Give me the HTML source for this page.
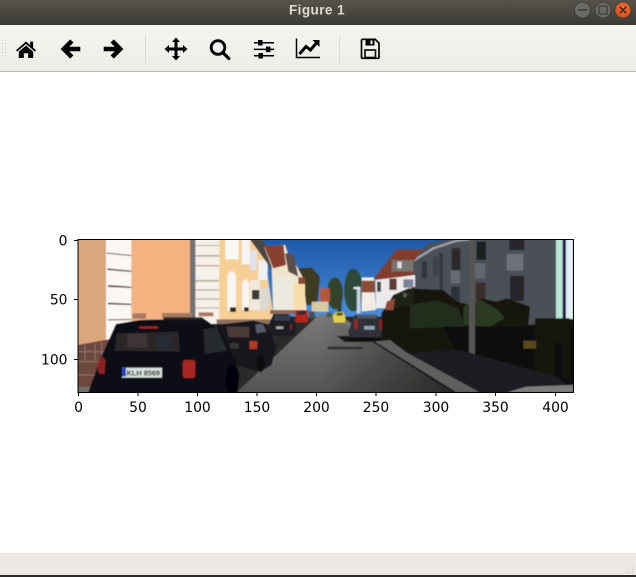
<!DOCTYPE html>
<html><head><meta charset="utf-8"><style>
html,body{margin:0;padding:0;background:#fff}
body{width:636px;height:577px;overflow:hidden;position:relative}
svg{position:absolute;left:0;top:0}
</style></head><body>
<svg width="636" height="577" viewBox="0 0 636 577" xmlns="http://www.w3.org/2000/svg">
<defs>
<linearGradient id="tb" x1="0" y1="0" x2="0" y2="1"><stop offset="0" stop-color="#575349"/><stop offset="1" stop-color="#3c3b37"/></linearGradient>
<linearGradient id="tl" x1="0" y1="0" x2="0" y2="1"><stop offset="0" stop-color="#f6f4f0"/><stop offset="1" stop-color="#eeece7"/></linearGradient>
<linearGradient id="sky" x1="0" y1="0" x2="0" y2="1"><stop offset="0" stop-color="#1c57a8"/><stop offset="1" stop-color="#4a8dd8"/></linearGradient>
<linearGradient id="road" gradientUnits="userSpaceOnUse" x1="0" y1="255" x2="0" y2="487"><stop offset="0" stop-color="#7a7977"/><stop offset="1" stop-color="#555452"/></linearGradient>
<linearGradient id="shade" gradientUnits="userSpaceOnUse" x1="30" y1="0" x2="410" y2="0"><stop offset="0" stop-color="#000" stop-opacity="0"/><stop offset="1" stop-color="#000" stop-opacity=".5"/></linearGradient>
<filter id="b" x="-5%" y="-5%" width="110%" height="110%"><feGaussianBlur stdDeviation="1.5"/></filter>
<clipPath id="im"><rect x="78" y="239" width="495.500" height="153"/></clipPath>
<radialGradient id="cl" cx=".5" cy=".4" r=".6"><stop offset="0" stop-color="#f0703c"/><stop offset="1" stop-color="#d9501f"/></radialGradient>
</defs>
<rect width="636" height="577" fill="#fff"/>
<rect width="636" height="25" fill="url(#tb)"/>
<text x="317" y="14.500" text-anchor="middle" font-family="'Liberation Sans',sans-serif" font-size="13.500" font-weight="700" fill="#dfdbd2" letter-spacing=".45">Figure 1</text>
<circle cx="582.500" cy="10" r="8" fill="#6a6a64" stroke="#38362f" stroke-width=".7"/>
<rect x="578" y="9.300" width="9" height="1.400" fill="#3c3b37"/>
<circle cx="603" cy="10" r="8" fill="#6a6a64" stroke="#38362f" stroke-width=".7"/>
<rect x="599" y="6" width="8" height="8" fill="none" stroke="#3c3b37" stroke-width="1.200"/>
<circle cx="623" cy="10" r="8" fill="url(#cl)" stroke="#3f3a30" stroke-width=".7"/>
<path d="M619.800 6.800l6.400 6.400M626.200 6.800l-6.400 6.400" stroke="#4a2412" stroke-width="1.500"/>

<rect y="25" width="636" height="46" fill="url(#tl)"/>
<rect y="71" width="636" height="1" fill="#bdb8af"/>
<g fill="#c9c6bf"><rect x="2" y="40" width="1" height="1"/><rect x="5" y="40" width="1" height="1"/><rect x="2" y="43" width="1" height="1"/><rect x="5" y="43" width="1" height="1"/><rect x="2" y="46" width="1" height="1"/><rect x="5" y="46" width="1" height="1"/><rect x="2" y="49" width="1" height="1"/><rect x="5" y="49" width="1" height="1"/><rect x="2" y="52" width="1" height="1"/><rect x="5" y="52" width="1" height="1"/><rect x="2" y="55" width="1" height="1"/><rect x="5" y="55" width="1" height="1"/></g>
<rect x="145" y="35" width="1" height="28" fill="#dedbd4"/>
<rect x="339" y="35" width="1" height="28" fill="#dedbd4"/>

<!-- home -->
<path d="M16 50.200 26 41.500l4.200 3.600V41.600h2.900v6L36 50.200l-1.200 1.300L26 44 17.200 51.500Z" fill="#000"/>
<path d="M18.800 51.600 26 45.600l7.200 6V58h-5v-4.800h-4.400V58h-5Z" fill="#000"/>
<!-- back -->
<path d="M61 49 70.200 39.800 73 42.600 68.600 47H80v4H68.600L73 55.400 70.200 58.200Z" fill="#000" stroke="#000" stroke-width=".6" stroke-linejoin="round"/>
<!-- forward -->
<path d="M123 49 113.800 39.800 111 42.600 115.400 47H104v4h11.400L111 55.400 113.800 58.200Z" fill="#000" stroke="#000" stroke-width=".6" stroke-linejoin="round"/>
<!-- move -->
<path d="M176 37.500l4 4.500h-2.500v5.500H183V45l4.500 4-4.500 4v-2.500h-5.500V56h2.500l-4 4.500-4-4.500h2.500v-5.500H169V53l-4.500-4 4.500-4v2.500h5.500V42H172Z" fill="#000"/>
<!-- zoom -->
<circle cx="218" cy="47.500" r="6.800" fill="none" stroke="#000" stroke-width="2.900"/>
<path d="M222.800 52.500l6 6" stroke="#000" stroke-width="3.200" stroke-linecap="round"/>
<!-- sliders -->
<g fill="#000"><rect x="254" y="42" width="20" height="1.500"/><rect x="254" y="48.600" width="20" height="1.500"/><rect x="254" y="55" width="20" height="1.500"/><rect x="258" y="40" width="4.500" height="5.500"/><rect x="266" y="46.600" width="4.500" height="5.500"/><rect x="258.500" y="53" width="4.500" height="5.500"/></g>
<!-- chart -->
<path d="M296.500 38.500V57.500H320" fill="none" stroke="#000" stroke-width="1.500"/>
<path d="M299.500 54 306 46.500 310.500 50 316 43.500" fill="none" stroke="#000" stroke-width="3"/>
<path d="M312.500 40h7v7Z" fill="#000"/>
<!-- save -->
<path d="M361.500 40.500a1.200 1.200 0 0 1 1.200-1.200h12.500l3.800 3.800v14a1.200 1.200 0 0 1-1.200 1.200h-15.100a1.200 1.200 0 0 1-1.200-1.200Z" fill="none" stroke="#000" stroke-width="1.700"/>
<path d="M365.500 39.500h9v6h-9Z" fill="#000"/><rect x="370.500" y="40.500" width="2" height="3.600" fill="#f2f0ec"/>
<rect x="365" y="50" width="10.500" height="7.500" fill="none" stroke="#000" stroke-width="1.600"/>

<!-- image -->
<g clip-path="url(#im)"><rect x="78" y="239" width="496" height="153" fill="#2b2a28"/>
<g filter="url(#b)" transform="translate(40 230) scale(.33333)">
<!-- sky -->
<rect x="640" y="20" width="1180" height="240" fill="url(#sky)"/>
<!-- far trees -->
<path d="M775 115 815 112 840 140 832 225 790 225Z" fill="#3d3a24"/>
<ellipse cx="885" cy="190" rx="24" ry="48" fill="#33452c"/><ellipse cx="940" cy="180" rx="28" ry="64" fill="#2e4a38"/>
<rect x="840" y="175" width="30" height="40" fill="#b5573a"/><rect x="815" y="215" width="50" height="30" fill="#d9c9a0"/>
<!-- left walls -->
<rect x="100" y="20" width="100" height="340" fill="#dca67d"/>
<rect x="198" y="20" width="78" height="310" fill="#fbf7f4"/>
<path d="M200 68l74 7v3l-74-7ZM202 115l72 7v4l-72-6ZM204 165l70 5v4l-70-3ZM204 218l70 3v4l-70-2ZM204 268l70-1v3l-70 1Z" fill="#5d4a45"/>
<rect x="274" y="20" width="178" height="262" fill="#f3b27f"/>
<rect x="450" y="20" width="16" height="250" fill="#6f7278"/>
<rect x="466" y="20" width="74" height="262" fill="#f6f0ea"/>
<path d="M466 45h72v3h-72ZM466 75h72v5h-72ZM466 105h72v4h-72ZM466 150h72v5h-72ZM466 178h72v4h-72ZM466 205h72v4h-72ZM466 232h72v3h-72Z" fill="#b8a79a"/>
<path d="M538 20H665L700 255 700 282H538Z" fill="#f5cf93"/>
<rect x="556" y="28" width="40" height="60" fill="#fbf8f5"/><rect x="605" y="28" width="25" height="75" fill="#f6f3f2"/><rect x="630" y="60" width="20" height="60" fill="#e3e2e8"/><rect x="655" y="90" width="28" height="60" fill="#eef0f2"/>
<path d="M562 135q13-25 26 0v108h-26ZM606 160q10-25 22 0v82h-22Z" fill="#faf5f0"/>
<rect x="570" y="232" width="18" height="14" fill="#2e2c2a"/><rect x="612" y="232" width="14" height="12" fill="#2e2c2a"/>
<rect x="630" y="150" width="30" height="90" fill="#f0e9de"/><rect x="660" y="175" width="28" height="65" fill="#dcd9d2"/>
<rect x="636" y="180" width="22" height="28" fill="#3b3936"/>
<path d="M630 28 665 28 740 120 700 125Z" fill="#4a4540"/>
<!-- right part of left houses -->
<path d="M672 50 735 45 745 75 760 90 790 145 800 240 700 248 695 110Z" fill="#f1e5cc"/>
<path d="M672 48 730 45 738 105 700 115Z" fill="#8a3f2f"/>
<path d="M735 70 760 70 775 140 745 125Z" fill="#5a5049"/>
<path d="M700 140h60v105h-60Z" fill="#ece9df"/><path d="M760 160h35v75h-35Z" fill="#f8dfaa"/>
<rect x="775" y="142" width="20" height="20" fill="#8a4a35"/>
<!-- wall base patches -->
<rect x="278" y="250" width="40" height="16" fill="#a57a62"/><rect x="366" y="249" width="90" height="14" fill="#a57a62"/><rect x="476" y="247" width="44" height="12" fill="#a57a62"/>
<rect x="530" y="268" width="170" height="14" fill="#8e7060"/><rect x="690" y="240" width="90" height="12" fill="#8a6a5a"/>
<!-- brick base -->
<path d="M113 345 222 325 150 470 113 470Z" fill="#6e473e"/>
<path d="M113 395h80M113 435h60M113 365h90M135 345v50M165 340v50M185 335v40" stroke="#92736a" stroke-width="3"/>
<path d="M113 470h60l-30 20h-30Z" fill="#716f68"/>
<!-- road -->
<path d="M590 487 835 255 900 255 1220 487Z" fill="url(#road)"/>
<!-- far car red -->
<rect x="766" y="240" width="38" height="38" rx="5" fill="#b4281f"/><rect x="772" y="243" width="25" height="11" fill="#3a2a2a"/>
<rect x="806" y="244" width="18" height="22" fill="#48505a"/>
<!-- car 3 -->
<path d="M688 280 700 252H745L768 285 765 318H690Z" fill="#1a1c22"/><rect x="703" y="255" width="48" height="17" fill="#363b4d"/><rect x="708" y="289" width="22" height="8" fill="#a8a6a0"/><rect x="750" y="282" width="6" height="16" fill="#7e2220"/>
<!-- car 2 -->
<path d="M530 285 640 272 680 282 708 350 695 405 660 425 590 405Z" fill="#12131a"/>
<path d="M560 290H628V322H565Z" fill="#4a3a38"/><path d="M645 283 668 282 680 305 650 310Z" fill="#565a66"/><rect x="628" y="333" width="24" height="24" fill="#b03a20"/><ellipse cx="662" cy="400" rx="12" ry="26" fill="#080808"/><rect x="570" y="338" width="26" height="18" fill="#343434"/>
<!-- main car -->
<path d="M145 487 180 390 228 282 300 270 490 265 540 300 585 395 598 430 592 487Z" fill="#0e0f14"/>
<path d="M230 310 415 305 420 365 224 362Z" fill="#2b2526"/>
<path d="M262 312h60v40h-60Z" fill="#3d3534"/><path d="M350 315h50v45h-50Z" fill="#282c34"/>
<path d="M490 298 530 292 562 362 495 372Z" fill="#262a2e"/>
<rect x="370" y="262" width="118" height="8" fill="#242424"/>
<rect x="298" y="289" width="56" height="7" fill="#a72024"/>
<rect x="428" y="390" width="38" height="54" rx="8" fill="#a82622"/>
<path d="M172 398 188 380 197 390 194 432 175 430Z" fill="#8b2320"/>
<rect x="246" y="413" width="120" height="30" fill="#d7e0dc"/><rect x="246" y="413" width="12" height="26" fill="#2244bb"/>
<text x="260" y="436" font-family="'Liberation Sans',sans-serif" font-size="23" font-weight="700" fill="#202028" textLength="100" lengthAdjust="spacingAndGlyphs">KLH 8569</text>
<ellipse cx="576" cy="450" rx="20" ry="46" fill="#050507"/>
</g>
<g filter="url(#b)" transform="translate(310 230) scale(.33333)">
<!-- right houses -->
<path d="M305 90 355 40 470 20H830V300H305Z" fill="#4c5059"/>
<path d="M305 95 370 55 440 32 480 28" fill="none" stroke="#9a9fa6" stroke-width="7"/>
<path d="M190 148 260 58H340L310 95 310 145Z" fill="#823c2f"/>
<path d="M245 90h65v35h-65Z" fill="#77736d"/><rect x="262" y="95" width="13" height="20" fill="#dcdde4"/>
<path d="M196 150 315 135V235H198Z" fill="#ecebea"/>
<rect x="238" y="146" width="22" height="34" fill="#5c3d35"/><rect x="280" y="148" width="30" height="25" fill="#7a8298"/>
<rect x="201" y="155" width="12" height="30" fill="#4a4a46"/>
<path d="M155 142 192 142 198 240 155 245Z" fill="#f2ece4"/><rect x="155" y="152" width="40" height="35" fill="#8a4e3a"/>
<rect x="140" y="170" width="12" height="80" fill="#c4d2e2"/><path d="M130 170h20v8h-20Z" fill="#e2e0dc"/>
<rect x="425" y="55" width="26" height="65" fill="#2a2b2f"/><rect x="335" y="95" width="16" height="50" fill="#33363d"/><rect x="368" y="80" width="17" height="55" fill="#3f424a"/>
<rect x="500" y="35" width="28" height="55" fill="#1f2024"/><rect x="598" y="28" width="45" height="32" fill="#25272c"/>
<rect x="590" y="72" width="50" height="50" fill="#6e7278"/><rect x="422" y="122" width="28" height="38" fill="#686c72"/><rect x="495" y="100" width="30" height="45" fill="#646870"/>
<rect x="600" y="138" width="42" height="75" fill="#26262a"/><rect x="497" y="158" width="30" height="50" fill="#3a2d2a"/><rect x="423" y="170" width="26" height="52" fill="#2b303b"/>
<rect x="388" y="70" width="10" height="120" fill="#35383e"/>
<!-- window right -->
<rect x="738" y="20" width="20" height="250" fill="#b6e7d4"/><rect x="758" y="20" width="10" height="250" fill="#2c1a4e"/><rect x="768" y="20" width="22" height="250" fill="#e0efef"/>
<!-- bushes -->
<path d="M215 250 250 195 295 175 400 180 440 215 480 225 510 205 560 215 590 205 660 230 655 285 800 265 800 487H430L190 335 215 320Z" fill="#12160f"/>
<path d="M300 225 380 210 445 235 465 290 300 295Z" fill="#222d1c"/>
<path d="M460 230 510 208 565 240 585 265 540 290 460 285Z" fill="#2a3a24"/>
<path d="M250 195 315 170 310 225 245 235Z" fill="#1a2019"/><circle cx="285" cy="195" r="7" fill="#56564c"/>
<path d="M230 215 255 205 250 240 225 240Z" fill="#8f4a38"/>
<path d="M400 290h400V487H500Z" fill="#0b0b0c"/>
<rect x="675" y="265" width="105" height="180" fill="#161211"/>
<rect x="640" y="332" width="38" height="24" fill="#58491f"/>
<rect x="477" y="30" width="18" height="365" fill="#555553"/>
<rect x="736" y="340" width="20" height="100" fill="#0a0908"/>
<!-- road right -->
<path d="M30 255 40 255 75 265 130 300 200 340 420 487H30Z" fill="url(#road)"/>
<path d="M30 255 40 255 75 265 130 300 200 340 420 487H30Z" fill="url(#shade)"/>
<path d="M50 350h110l-5 8H55Z" fill="#333"/>
<path d="M80 318 215 320 190 336H105Z" fill="#141415"/>
<!-- sidewalk -->
<path d="M190 335 240 330 290 368 520 487H430Z" fill="#5f5f5f"/>
<path d="M290 368 450 360 740 440 800 487H510Z" fill="#1c1b20"/>
<path d="M190 335 435 487" stroke="#161616" stroke-width="5"/>
<path d="M590 487 650 470 790 465 790 487Z" fill="#7b7e7b"/>
<!-- yellow car -->
<path d="M68 258 78 246H100L107 262 105 278H72Z" fill="#e3cf4a"/><rect x="80" y="248" width="18" height="9" fill="#51503a"/>
<rect x="50" y="248" width="16" height="14" fill="#505a5a"/>
<rect x="82" y="195" width="12" height="50" fill="#3c3c2c"/>
<!-- car right -->
<path d="M115 305 135 255H200L216 300 213 328 150 332 118 326Z" fill="#2e3339"/>
<rect x="142" y="254" width="58" height="11" fill="#505768"/><rect x="162" y="288" width="32" height="11" fill="#8fa3b0"/><rect x="133" y="268" width="10" height="30" fill="#982620"/><rect x="208" y="268" width="8" height="30" fill="#8e2420"/>
<path d="M118 322h95v10h-95Z" fill="#0c0c10"/>
</g></g>

<!-- axes frame -->
<rect x="78" y="239.500" width="495.500" height="153" fill="none" stroke="#000" stroke-width="1"/>
<g stroke="#000" stroke-width="1">
<path d="M78.500 392v4M138 392v4M197.500 392v4M257 392v4M316.500 392v4M376 392v4M436 392v4M495.500 392v4M555.500 392v4"/>
<path d="M74 240.500h4M74 299.500h4M74 359.500h4"/>
</g>
<g font-family="'DejaVu Sans',sans-serif" font-size="13.9" fill="#000" text-anchor="middle">
<text x="78.500" y="412">0</text><text x="138" y="412">50</text><text x="197.500" y="412">100</text><text x="257" y="412">150</text><text x="316.500" y="412">200</text><text x="376" y="412">250</text><text x="436" y="412">300</text><text x="495.500" y="412">350</text><text x="555.500" y="412">400</text>
</g>
<g font-family="'DejaVu Sans',sans-serif" font-size="13.9" fill="#000" text-anchor="end">
<text x="67.500" y="245.500">0</text><text x="67.500" y="304.500">50</text><text x="67.500" y="364.500">100</text>
</g>

<!-- status bar -->
<rect y="553" width="636" height="22" fill="#edeae5"/>
<rect y="575" width="636" height="2" fill="#2b2b2b"/>
<g fill="#c4c1ba"><rect x="632" y="569" width="1" height="1"/><rect x="628" y="569" width="1" height="1"/><rect x="632" y="572" width="1" height="1"/><rect x="628" y="572" width="1" height="1"/><rect x="625" y="572" width="1" height="1"/><rect x="632" y="566" width="1" height="1"/></g>
</svg>
</body></html>
